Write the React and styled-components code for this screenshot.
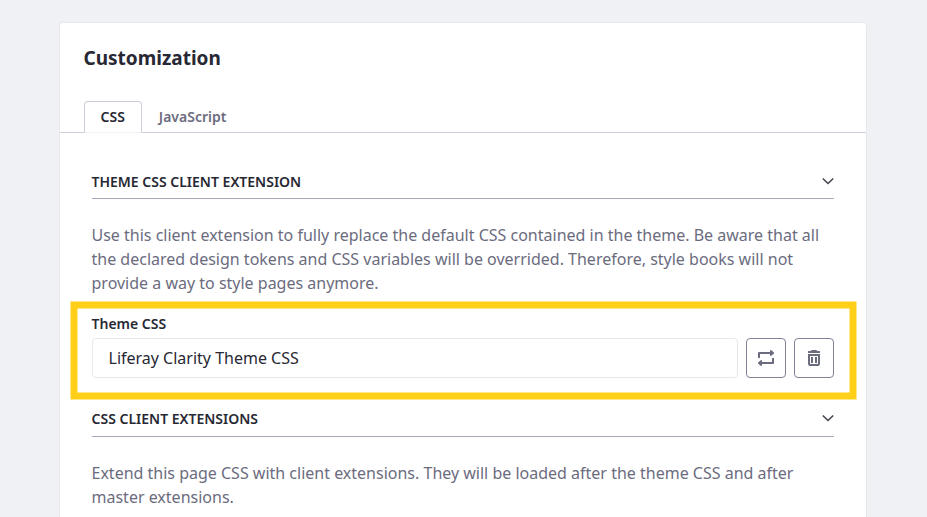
import React from 'react';
import styled, { createGlobalStyle } from 'styled-components';

const GlobalStyle = createGlobalStyle`
  *, *::before, *::after { box-sizing: border-box; }
  body {
    margin: 0;
    height: 517px;
    overflow: hidden;
    background: #f0f1f5;
    color: #272833;
    font-family: "Noto Sans", sans-serif;
    font-size: 16px;
    line-height: 24px;
  }
`;

const Page = styled.main`
  height: 517px;
  overflow: hidden;
  padding: 22px 60px 0 59px;
`;

const Card = styled.section`
  height: 560px;
  border: 1px solid #e7e7ed;
  border-radius: 4px;
  background: #fff;
`;

const Title = styled.h1`
  margin: 0;
  padding: 20px 24px 0 23.5px;
  font-size: 19px;
  font-weight: 700;
  line-height: 30px;
`;

const Tabs = styled.div`
  display: flex;
  height: 32px;
  margin-top: 28px;
  padding-left: 24px;
  border-bottom: 1px solid #cdced9;
`;

const Tab = styled.button`
  height: 32px;
  padding: 0 16.5px 2px 15.5px;
  border: 1px solid ${(p) => (p.$active ? '#cdced9' : 'transparent')};
  border-bottom-color: ${(p) => (p.$active ? '#f1f2f5' : '#cdced9')};
  border-radius: 4px 4px 0 0;
  background: ${(p) => (p.$active ? '#fff' : 'transparent')};
  color: ${(p) => (p.$active ? '#272833' : '#6b6c7e')};
  font: 600 14px/21px "Noto Sans", sans-serif;
`;

const Content = styled.div`
  padding: 38px 32px 0 31.5px;
`;

const SectionHeader = styled.h2`
  display: flex;
  align-items: flex-start;
  justify-content: space-between;
  height: ${(p) => p.$height}px;
  margin: 0;
  border-bottom: 1px solid #a9a6bd;
  font-size: 14px;
  font-weight: 600;
  line-height: 21px;
`;

const Chevron = styled.svg`
  width: 12px;
  height: 12px;
  margin-top: 4px;
  fill: none;
  stroke: #454552;
  stroke-width: 1.6;
`;

const Description = styled.p`
  margin: 24px 0 0;
  color: #6b6c7e;
  white-space: nowrap;
`;

const Highlight = styled.div`
  position: relative;
  height: 98px;
  margin: 6px -23px 9px -22px;
  padding: 12px 23px 0 22px;

  &::after {
    content: '';
    position: absolute;
    inset: 0 0 0 1px;
    border: 7px solid #ffcf19;
    pointer-events: none;
    transform: translate(-0.5px, 0.5px);
  }
`;

const Label = styled.label`
  display: block;
  font-size: 14px;
  font-weight: 600;
  line-height: 21px;
`;

const Field = styled.div`
  display: flex;
  gap: 8px;
  margin-top: 4px;
`;

const Input = styled.input`
  flex: 1;
  min-width: 0;
  height: 40px;
  padding: 0 16px;
  border: 1px solid #e7e7ed;
  border-radius: 4px;
  background: #fff;
  color: #272833;
  font: 16px/24px "Noto Sans", sans-serif;
`;

const IconButton = styled.button`
  display: flex;
  align-items: center;
  justify-content: center;
  width: 40px;
  height: 40px;
  padding: 0;
  border: 1px solid #857f97;
  border-radius: 4px;
  background: #fff;
  color: #6b6c7e;
`;

const Glyph = styled.svg`
  width: 16px;
  height: 16px;
  fill: currentColor;
`;

function Header({ children, height = 28 }) {
  return (
    <SectionHeader $height={height}>
      {children}
      <Chevron viewBox="0 0 12 12"><path d="M0.8 3.5l5.2 5 5.2-5" /></Chevron>
    </SectionHeader>
  );
}

export default function App() {
  return (
    <>
      <GlobalStyle />
      <Page>
        <Card>
          <Title>Customization</Title>
          <Tabs>
            <Tab $active>CSS</Tab>
            <Tab>JavaScript</Tab>
          </Tabs>
          <Content>
            <Header>THEME CSS CLIENT EXTENSION</Header>
            <Description>
              Use this client extension to fully replace the default CSS contained in the theme. Be aware that all<br />
              the declared design tokens and CSS variables will be overrided. Therefore, style books will not<br />
              provide a way to style pages anymore.
            </Description>
            <Highlight>
              <Label htmlFor="theme-css">Theme CSS</Label>
              <Field>
                <Input id="theme-css" readOnly value="Liferay Clarity Theme CSS" />
                <IconButton aria-label="Replace">
                  <Glyph viewBox="0 0 16 16">
                    <path d="M0 7.2V3a1 1 0 0 1 1-1h11V1a.8.8 0 0 1 1.3-.7l2.4 2a.9.9 0 0 1 0 1.4l-2.4 2A.8.8 0 0 1 12 5V4H2v3.2a1 1 0 0 1-2 0zM16 8.8V13a1 1 0 0 1-1 1H4v1a.8.8 0 0 1-1.3.7l-2.4-2a.9.9 0 0 1 0-1.4l2.4-2A.8.8 0 0 1 4 11v1h10V8.8a1 1 0 0 1 2 0z" />
                  </Glyph>
                </IconButton>
                <IconButton aria-label="Delete">
                  <Glyph viewBox="0 0 16 16">
                    <path d="M5 1a1 1 0 0 1 1-1h4a1 1 0 0 1 1 1h2.5a.5.5 0 0 1 .5.5V3H2V1.5a.5.5 0 0 1 .5-.5z" />
                    <path fillRule="evenodd" d="M2 4h12v9.8a2.2 2.2 0 0 1-2.2 2.2H4.200A2.200 2.200 0 0 1 2 13.800zM4 6v7.300a.7.7 0 0 0 .7.7h6.600a.7.7 0 0 0 .7-.7V6z" />
                    <path d="M5 7h2v6H5zM9 7h2v6H9z" />
                  </Glyph>
                </IconButton>
              </Field>
            </Highlight>
            <Header height={29}>CSS CLIENT EXTENSIONS</Header>
            <Description>
              Extend this page CSS with client extensions. They will be loaded after the theme CSS and after<br />
              master extensions.
            </Description>
          </Content>
        </Card>
      </Page>
    </>
  );
}
